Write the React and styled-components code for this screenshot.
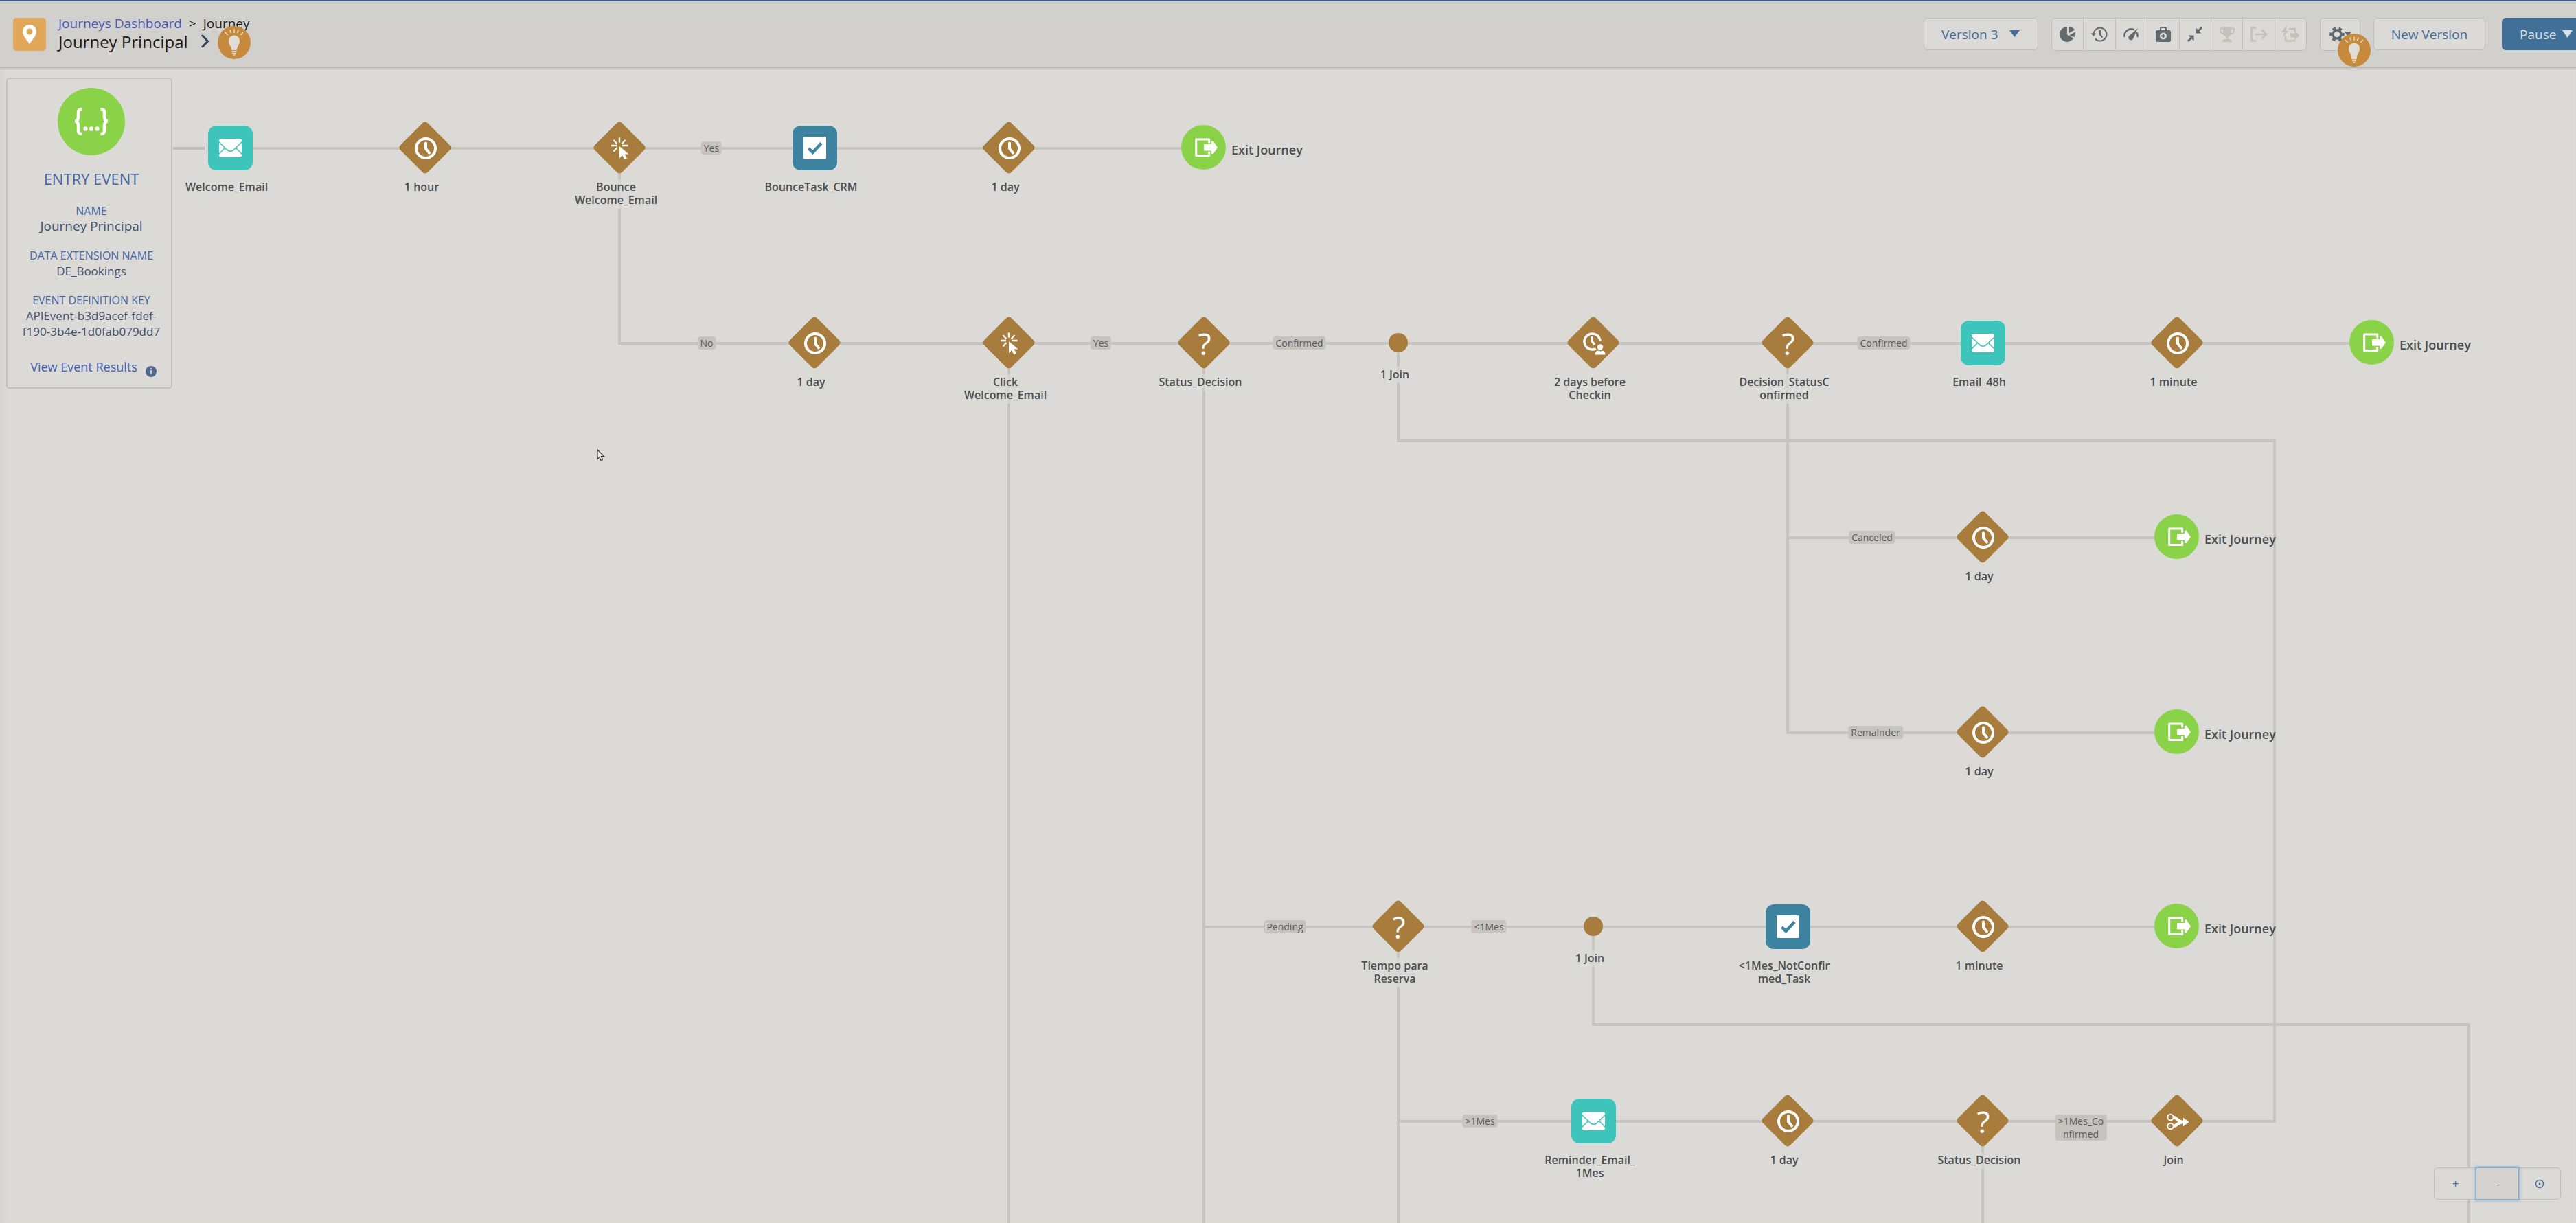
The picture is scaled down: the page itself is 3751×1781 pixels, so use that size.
import React from "react";
import styled, { createGlobalStyle } from "styled-components";

const Global = createGlobalStyle`
  * { box-sizing: border-box; }
  body { margin: 0; background: #dbdad6; font-family: "Open Sans", "Noto Sans", sans-serif; }
  button, select { font-family: inherit; margin: 0; }
`;

const Page = styled.div`
  display: flex;
  flex-direction: column;
  height: 100vh;
  overflow: hidden;
`;

/* ---------- header ---------- */

const Header = styled.header`
  display: flex;
  align-items: center;
  height: 99px;
  flex: none;
  padding-left: 19px;
  background: #d2d0cc;
  border-top: 1px solid #1f60a8;
  border-bottom: 1px solid #b7b4a8;
`;

const Logo = styled.div`
  display: flex;
  align-items: center;
  justify-content: center;
  width: 48px;
  height: 48px;
  border-radius: 5px;
  background: #dfa757;
`;

const Heading = styled.div`
  display: flex;
  flex-direction: column;
  align-items: flex-start;
  margin-left: 18px;
  padding-bottom: 4px;
`;

const Crumbs = styled.nav`
  display: flex;
  gap: 10px;
  font-size: 19px;
  line-height: 25px;
  color: #1c1c1c;
`;

const CrumbLink = styled.a`
  color: #4659b9;
  text-decoration: none;
`;

const TitleRow = styled.div`
  position: relative;
  display: flex;
  align-items: center;
  gap: 18px;
`;

const Title = styled.h1`
  margin: 0;
  font-size: 24px;
  font-weight: 400;
  line-height: 27px;
  color: #1a1a1a;
`;

const PlainButton = styled.button`
  display: flex;
  padding: 0;
  border: 0;
  background: none;
`;

const Tip = styled.div`
  position: absolute;
  z-index: 2;
  left: ${(p) => p.$left};
  top: ${(p) => p.$top}px;
  width: 48px;
  height: 48px;
  border-radius: 50%;
  background: #c68a3d;
`;

const Actions = styled.div`
  display: flex;
  align-items: center;
  gap: 19px;
  margin-left: auto;
`;

const SelectWrap = styled.div`
  position: relative;
  svg { position: absolute; right: 27px; top: 18px; pointer-events: none; }
`;

const VersionSelect = styled.select`
  appearance: none;
  width: 167px;
  height: 47px;
  padding: 0 0 0 25px;
  border: 1px solid #c0beb8;
  border-radius: 6px;
  background: #dbdad6;
  color: #416d9c;
  font-size: 19px;
`;

const Group = styled.div`
  display: flex;
  width: 372px;
  height: 48px;
  border: 1px solid #c0beb8;
  border-radius: 6px;
  background: #dbdad6;
`;

const Tool = styled.button`
  display: flex;
  flex: 1;
  align-items: center;
  justify-content: center;
  padding: 0;
  border: 0;
  background: none;
  color: #616b6f;
  & + & { border-left: 1px solid #c0beb8; }
  &:disabled { color: #c3c1ba; }
`;

const Settings = styled.div`
  position: relative;
  display: flex;
  width: 59px;
  height: 48px;
  border: 1px solid #c0beb8;
  border-radius: 6px;
  background: #dbdad6;
`;

const NewVersion = styled.button`
  width: 163px;
  height: 47px;
  padding: 0;
  border: 1px solid #c0beb8;
  border-radius: 6px;
  background: #dbdad6;
  color: #416d9c;
  font-size: 19px;
`;

const Pause = styled.button`
  display: flex;
  align-items: center;
  gap: 9px;
  width: 108px;
  height: 47px;
  margin-left: 5px;
  padding: 0 0 0 26px;
  border: 0;
  border-radius: 6px 0 0 6px;
  background: #406f98;
  color: #dcdfe0;
  font-size: 19px;
`;

/* ---------- canvas ---------- */

const Canvas = styled.main`
  position: relative;
  flex: 1;
  overflow: hidden;
  background: #dbdad6;
  box-shadow: inset 0 5px 4px -3px #cbc9c5, inset 10px 0 8px -6px #d3d1cd;
`;

const Wires = styled.svg`
  position: absolute;
  inset: 0;
  width: 100%;
  height: 100%;
  fill: none;
  stroke: #c7c4c0;
  stroke-width: 4;
`;

const NodeBox = styled.div`
  position: absolute;
  left: ${(p) => p.$x - 81}px;
  top: ${(p) => p.$y - p.$half}px;
  width: 162px;
`;

const Shape = styled.div`
  display: flex;
  align-items: center;
  justify-content: center;
  height: ${(p) => p.$half * 2}px;
`;

const Caption = styled.div`
  padding: 2px 10px 3px 0;
  background: rgba(219, 218, 214, 0.7);
  color: #4a4e51;
  font-size: 16px;
  font-weight: 600;
  line-height: 19px;
  text-align: center;
  white-space: pre-line;
`;

const ExitBox = styled.div`
  position: absolute;
  left: ${(p) => p.$x - 33}px;
  top: ${(p) => p.$y - 33}px;
  display: flex;
  align-items: center;
  gap: 8px;
`;

const ExitText = styled.span`
  padding-top: 6px;
  color: #4a4e51;
  font-size: 18px;
  font-weight: 600;
  line-height: 24px;
  white-space: nowrap;
`;

const Tag = styled.span`
  position: absolute;
  left: ${(p) => p.$x}px;
  top: ${(p) => p.$y - 9}px;
  padding: 0 4px;
  border-radius: 4px;
  background: #c7c4c0;
  color: #57595a;
  font-size: 14px;
  line-height: 19px;
  text-align: center;
  white-space: pre;
  transform: translateX(-50%);
`;

const EntryCard = styled.section`
  position: absolute;
  left: 9px;
  top: 14px;
  width: 242px;
  height: 453px;
  display: flex;
  flex-direction: column;
  align-items: center;
  padding: 13px 0 0 6px;
  border: 2px solid #c4c2bd;
  border-radius: 5px;
  background: #dbdad6;
`;

const EntryTitle = styled.h2`
  margin: 19px 0 21px;
  color: #4466a3;
  font-size: 22px;
  font-weight: 400;
  line-height: 30px;
`;

const Facts = styled.dl`
  margin: 0;
  text-align: center;
`;

const Term = styled.dt`
  color: #4466a3;
  font-size: 16px;
  line-height: 22px;
`;

const Detail = styled.dd`
  margin: 0 0 20px;
  color: #42506e;
  font-size: ${(p) => (p.$large ? 19 : 17)}px;
  line-height: 23px;
`;

const Results = styled.div`
  display: flex;
  align-items: flex-start;
  gap: 12px;
  margin-top: 8px;
  padding-left: 6px;
`;

const ResultsLink = styled.a`
  color: #4260b5;
  font-size: 18px;
  line-height: 24px;
  text-decoration: none;
`;

const Info = styled.span`
  width: 16px;
  height: 16px;
  margin-top: 11px;
  border-radius: 50%;
  background: #52688f;
  color: #dbdad6;
  font-family: "Liberation Serif", serif;
  font-size: 12px;
  font-weight: 700;
  line-height: 16px;
  text-align: center;
`;

const ZoomBar = styled.div`
  position: absolute;
  right: 22px;
  bottom: 34px;
  display: flex;
  width: 185px;
  height: 47px;
  border: 1px solid #bfbdb7;
  border-radius: 6px;
  background: #dbdad6;
`;

const ZoomButton = styled.button`
  display: flex;
  flex: 1;
  align-items: center;
  justify-content: center;
  padding: 0;
  border: 0;
  background: ${(p) => (p.$on ? "#d5d3cf" : "none")};
  box-shadow: ${(p) => (p.$on ? "0 0 0 1px #8fa9bd, 0 0 4px 2px #78aad2" : "none")};
  color: ${(p) => (p.$on ? "#3c4450" : "#416d9c")};
  font-size: 16px;
`;

const Pointer = styled.svg`
  position: absolute;
  left: 869px;
  top: 555px;
`;

/* ---------- drawings ---------- */

const Triangle = ({ w = 15, h = 10 }) => (
  <svg width={w} height={h} viewBox="0 0 15 10" preserveAspectRatio="none" aria-hidden="true">
    <path d="M0 0h15L7.500 10z" fill="currentColor" />
  </svg>
);

const Bulb = () => (
  <svg width="48" height="48" viewBox="0 0 48 48" fill="#e0ddd6" aria-hidden="true">
    <path d="M24 13.500c-4.800 0-8 3.600-8 8.200 0 5 3.800 8 4.300 13.300h7.400C28.200 29.700 32 26.700 32 21.700c0-4.600-3.200-8.200-8-8.200z" />
    <path d="M20.500 36.800h7M21 39.500h6M22.500 42h3" stroke="#e0ddd6" strokeWidth="1.400" />
    <path d="M24 4.500v5.500M17.800 5.500l1.700 4.700M30.200 5.500l-1.700 4.700M11 9l3.800 4M37 9l-3.800 4" stroke="#e0ddd6" strokeWidth="1.500" />
  </svg>
);

const glyphs = {
  clock: (
    <g fill="none" stroke="#fff" strokeWidth="4" transform="translate(1 1)">
      <circle r="14" />
      <path d="M0-7.500V.5l5 6" strokeLinecap="round" strokeLinejoin="round" />
    </g>
  ),
  click: (
    <g>
      <path d="M-12-3h8M4-3h8.500M0-14.500v7M-8.500-11l5 5.500M8.500-11l-5 5.500M-8.500 5.500l5-5.500" stroke="#fff" strokeWidth="2.400" />
      <path d="M0-2V15.500l4-4.500 3.500 6.500 3.500-2-3.400-6h6z" fill="#fff" />
    </g>
  ),
  clockUser: (
    <g>
      <path d="M3.800 8.700A11.500 11.500 0 1 1 10-2" fill="none" stroke="#fff" strokeWidth="3.500" />
      <path d="M-2-9v7l4 5" fill="none" stroke="#fff" strokeWidth="3.400" />
      <circle cx="10" cy="6.500" r="4.200" fill="#fff" />
      <path d="M2.500 17.500c0-4 1.500-6 4.500-6q3 2 6 0c3 0 4.500 2 4.500 6z" fill="#fff" />
    </g>
  ),
  join: (
    <g fill="none" stroke="#fff">
      <circle cx="-9.500" cy="-5" r="4.200" strokeWidth="2" />
      <circle cx="-9.500" cy="8" r="4.200" strokeWidth="2" />
      <path d="M-5-5C1-4 1 2 9 2M-5 8C1 7 1 2 9 2" strokeWidth="4.500" />
      <path d="M9-4.500L17.500 2 9 8.500z" fill="#fff" stroke="none" />
    </g>
  ),
};

const Diamond = ({ glyph }) => (
  <svg width="80" height="80" viewBox="-40 -40 80 80" aria-hidden="true">
    <rect x="-28" y="-28" width="56" height="56" rx="5" fill="#a87c3c" transform="rotate(45)" />
    {glyph === "question" ? (
      <text x="1" y="18" textAnchor="middle" fill="#fff" fontSize="44" fontWeight="500">?</text>
    ) : (
      glyphs[glyph]
    )}
  </svg>
);

const Email = () => (
  <svg width="65" height="65" viewBox="0 0 65 65" aria-hidden="true">
    <rect width="65" height="65" rx="12" fill="#3ec5bb" />
    <rect x="16" y="19" width="33" height="27" rx="3" fill="#fff" />
    <path d="M15 23l13 12.500q4.500 3.500 9 0L50 23M15 42l9.500-9.500M50 42l-9.500-9.500" fill="none" stroke="#3ec5bb" strokeWidth="1.600" />
  </svg>
);

const Task = () => (
  <svg width="65" height="65" viewBox="0 0 65 65" aria-hidden="true">
    <rect width="65" height="65" rx="12" fill="#3d829e" />
    <rect x="16" y="16" width="33" height="33" rx="2" fill="#fff" />
    <path d="M23.500 33l6 6L42 25.500" fill="none" stroke="#3d829e" strokeWidth="4.500" />
  </svg>
);

const Dot = () => (
  <svg width="28" height="28" aria-hidden="true"><circle cx="14" cy="14" r="14" fill="#a87c3c" /></svg>
);

const ExitIcon = () => (
  <svg width="65" height="65" viewBox="-32.500 -32.500 65 65" aria-hidden="true">
    <circle r="32.500" fill="#8ad349" />
    <path d="M8.200-6v-5.500h-19v23.500h19V6.500" fill="none" stroke="#fff" strokeWidth="3" strokeLinejoin="round" />
    <path d="M1-4h11v-4.500h2L20 .5l-6 8.500h-2V4.500H1z" fill="#fff" stroke="#fff" strokeLinejoin="round" />
  </svg>
);

const Braces = () => (
  <svg width="98" height="98" viewBox="-49 -49 98 98" aria-hidden="true">
    <circle r="49" fill="#8ad349" />
    <path d="M-13.500-18c-5 0-5.500 2-5.500 5v6c0 3-1 6-4.500 6.500C-20 0-19 3-19 6v7c0 3 .5 5 5.500 5M13.500-18c5 0 5.500 2 5.500 5v6c0 3 1 6 4.500 6.500C20 0 19 3 19 6v7c0 3-.5 5-5.500 5" fill="none" stroke="#fff" strokeWidth="4.500" />
    <g fill="#fff">
      <rect x="-11.500" y="7.500" width="6" height="6" rx="2" />
      <rect x="-3" y="7.500" width="6" height="6" rx="2" />
      <rect x="5.500" y="7.500" width="6" height="6" rx="2" />
    </g>
  </svg>
);

const toolIcons = {
  Analytics: (
    <g fill="currentColor">
      <path d="M11 1A11 11 0 1 0 20.500 17.500L11 12.500z" />
      <path d="M14 1v9l8-4.500A10 10 0 0 0 14 1zM23 8.500l-9 5 7.500 2.500A11 11 0 0 0 23 8.500z" />
    </g>
  ),
  History: (
    <g fill="none" stroke="currentColor" strokeWidth="2">
      <path d="M3.500 12A9.500 9.500 0 1 1 6 18.500M13 6v6.500l3.500 4" />
      <path d="M0 10.500h7L3.500 15z" fill="currentColor" stroke="none" />
    </g>
  ),
  Health: (
    <g fill="none" stroke="currentColor" strokeWidth="2.400">
      <path d="M2.500 16A10 10 0 0 1 17 5.500M20 9a9 9 0 0 1 1.500 7" />
      <path d="M22 3l-7 15.500a3.600 3.600 0 1 1-5.500-4.500z" fill="currentColor" stroke="none" />
    </g>
  ),
  Test: (
    <g>
      <path d="M8 6V3.500Q8 2 9.500 2h5Q16 2 16 3.500V6" fill="none" stroke="currentColor" strokeWidth="2" />
      <rect x="1" y="6" width="22" height="17" rx="2.500" fill="currentColor" />
      <circle cx="12" cy="14.500" r="5" fill="#dbdad6" />
      <path d="M12 11.500v6M9 14.500h6" stroke="currentColor" strokeWidth="2.200" />
    </g>
  ),
  Collapse: (
    <g fill="currentColor">
      <path d="M13.500 2.500v8h8l-3-3L23 3l-2-2-4.500 4.500zM10.500 21.500v-8h-8l3 3L1 21l2 2 4.500-4.500z" />
    </g>
  ),
  Goal: (
    <g fill="currentColor">
      <path d="M6 1h12v9a6 6 0 0 1-4.500 5.500V19h-3v-3.500A6 6 0 0 1 6 10z" />
      <path d="M6 3.500H2V6q0 4.500 5 5.500M18 3.500h4V6q0 4.500-5 5.500" fill="none" stroke="currentColor" strokeWidth="2" />
      <path d="M5 23q0-4 4-4h6q4 0 4 4z" />
    </g>
  ),
  Exit: (
    <g fill="none" stroke="currentColor" strokeWidth="2.600">
      <path d="M8.500 2.500h-7v19h7M7 12h15M16.500 5.500L23 12l-6.500 6.500" />
    </g>
  ),
  "Quick exit": (
    <g fill="none" stroke="currentColor" strokeWidth="2.400">
      <path d="M10 4h8.500v4M5 14v7.500h13.500V19" />
      <path d="M7.500-2L-1 9h4.500L1 16 9 7H5z" fill="currentColor" stroke="none" />
      <path d="M12 10.500h7V7l6.500 6.500L19 20v-3.500h-7z" fill="currentColor" stroke="none" />
    </g>
  ),
};

const ToolIcon = ({ name }) => (
  <svg width="24" height="24" viewBox="0 0 24 24" overflow="visible" aria-hidden="true">{toolIcons[name]}</svg>
);

const Gear = () => (
  <svg width="22" height="22" viewBox="-11 -11 22 22" fill="none" stroke="currentColor" aria-hidden="true">
    <circle r="6" strokeWidth="3.500" />
    <circle r="9" strokeWidth="3.500" strokeDasharray="4.700 4.725" strokeDashoffset="2.300" />
  </svg>
);

/* ---------- journey data ---------- */

const col = [335, 619, 902, 1186, 1469, 1753, 2036, 2320, 2603, 2887, 3170, 3454];
const row = [116, 400, 683, 967, 1250, 1533];

const nodes = [
  [0, 0, "email", "Welcome_Email"],
  [1, 0, "clock", "1 hour"],
  [2, 0, "click", "Bounce\nWelcome_Email"],
  [3, 0, "task", "BounceTask_CRM"],
  [4, 0, "clock", "1 day"],
  [3, 1, "clock", "1 day"],
  [4, 1, "click", "Click\nWelcome_Email"],
  [5, 1, "question", "Status_Decision"],
  [6, 1, "dot", "1 Join"],
  [7, 1, "clockUser", "2 days before\nCheckin"],
  [8, 1, "question", "Decision_StatusC\nonfirmed"],
  [9, 1, "email", "Email_48h"],
  [10, 1, "clock", "1 minute"],
  [9, 2, "clock", "1 day"],
  [9, 3, "clock", "1 day"],
  [6, 4, "question", "Tiempo para\nReserva"],
  [7, 4, "dot", "1 Join"],
  [8, 4, "task", "<1Mes_NotConfir\nmed_Task"],
  [9, 4, "clock", "1 minute"],
  [7, 5, "email", "Reminder_Email_\n1Mes"],
  [8, 5, "clock", "1 day"],
  [9, 5, "question", "Status_Decision"],
  [10, 5, "join", "Join"],
];

const exits = [[5, 0], [11, 1], [10, 2], [10, 3], [10, 4]];

const tags = [
  [1036, 0, "Yes"],
  [1029, 1, "No"],
  [1603, 1, "Yes"],
  [1892, 1, "Confirmed"],
  [2743, 1, "Confirmed"],
  [2726, 2, "Canceled"],
  [2731, 3, "Remainder"],
  [1871, 4, "Pending"],
  [2168, 4, "<1Mes"],
  [2155, 5, ">1Mes"],
  [3030, 5, ">1Mes_Co\nnfirmed"],
];

const far = 4000;
const line = row.map((y) => y + 1);
const wires = [
  `M${col[0]} ${line[0]}H${col[5]}`,
  `M${col[2]} ${line[0]}V${line[1]}H${col[11]}`,
  `M${col[4]} ${line[1]}V${far}`,
  `M${col[5]} ${line[1]}V${far}`,
  `M${col[6]} ${line[1]}V543H3312V${line[5]}H${col[6]}`,
  `M${col[8]} ${line[1]}V${line[3]}H${col[10]}`,
  `M${col[8]} ${line[2]}H${col[10]}`,
  `M${col[5]} ${line[4]}H${col[10]}`,
  `M${col[6]} ${line[4]}V${far}`,
  `M${col[7]} ${line[4]}V1393H3595V${far}`,
  `M${col[9]} ${line[5]}V${far}`,
];

const JourneyNode = ({ c, r, kind, label }) => {
  const half = kind === "dot" ? 35 : 46;
  return (
    <NodeBox $x={col[c]} $y={row[r]} $half={half}>
      <Shape $half={half}>
        {kind === "email" ? <Email /> : kind === "task" ? <Task /> : kind === "dot" ? <Dot /> : <Diamond glyph={kind} />}
      </Shape>
      <Caption>{label}</Caption>
    </NodeBox>
  );
};

export default function App() {
  return (
    <Page>
      <Global />
      <Header>
        <Logo>
          <svg width="22" height="30" viewBox="0 0 22 30" aria-hidden="true">
            <path fillRule="evenodd" d="M11 1C5 1 1 5.500 1 11c0 7 6 11.500 10 18 4-6.500 10-11 10-18C21 5.500 17 1 11 1zm0 5.500a4.500 4.500 0 1 1 0 9 4.500 4.500 0 0 1 0-9z" fill="#fff" />
          </svg>
        </Logo>
        <Heading>
          <Crumbs aria-label="Breadcrumb">
            <CrumbLink href="#dashboard">Journeys Dashboard</CrumbLink>
            <span>&gt;</span>
            <span>Journey</span>
          </Crumbs>
          <TitleRow>
            <Title>Journey Principal</Title>
            <PlainButton aria-label="Show details">
              <svg width="13" height="20" viewBox="0 0 13 20" fill="none" stroke="#34435c" strokeWidth="3">
                <path d="M2 1l8.500 9L2 19" />
              </svg>
            </PlainButton>
            <Tip $left="calc(100% + 12px)" $top={-9}><Bulb /></Tip>
          </TitleRow>
        </Heading>
        <Actions>
          <SelectWrap>
            <VersionSelect aria-label="Version" defaultValue="3">
              <option value="3">Version 3</option>
            </VersionSelect>
            <svg width="15" height="10" viewBox="0 0 15 10"><path d="M0 0h15L7.500 10z" fill="#416d9c" /></svg>
          </SelectWrap>
          <Group>
            {Object.keys(toolIcons).map((name, i) => (
              <Tool key={name} aria-label={name} disabled={i > 4}><ToolIcon name={name} /></Tool>
            ))}
          </Group>
          <Settings>
            <Tool aria-label="Settings"><Gear /><Triangle w={10} h={8} /></Tool>
            <Tip $left="25px" $top={22}><Bulb /></Tip>
          </Settings>
          <NewVersion>New Version</NewVersion>
          <Pause>Pause <Triangle w={15} h={11} /></Pause>
        </Actions>
      </Header>
      <Canvas>
        <Wires aria-hidden="true">
          {wires.map((d) => <path key={d} d={d} />)}
          <path d={`M252 ${line[0]}H298`} stroke="#bebcb7" />
        </Wires>
        {tags.map(([x, r, text]) => <Tag key={x} $x={x} $y={row[r]}>{text}</Tag>)}
        {nodes.map(([c, r, kind, label]) => <JourneyNode key={`${c}-${r}`} c={c} r={r} kind={kind} label={label} />)}
        {exits.map(([c, r]) => (
          <ExitBox key={`${c}-${r}`} $x={col[c]} $y={row[r]}>
            <ExitIcon />
            <ExitText>Exit Journey</ExitText>
          </ExitBox>
        ))}
        <EntryCard>
          <Braces />
          <EntryTitle>ENTRY EVENT</EntryTitle>
          <Facts>
            <Term>NAME</Term>
            <Detail $large>Journey Principal</Detail>
            <Term>DATA EXTENSION NAME</Term>
            <Detail>DE_Bookings</Detail>
            <Term>EVENT DEFINITION KEY</Term>
            <Detail>APIEvent-b3d9acef-fdef-<br />f190-3b4e-1d0fab079dd7</Detail>
          </Facts>
          <Results>
            <ResultsLink href="#results">View Event Results</ResultsLink>
            <Info>i</Info>
          </Results>
        </EntryCard>
        <Pointer width="12" height="18" viewBox="0 0 12 18" aria-label="Pointer">
          <path d="M1 1v13.500l3-3 2 5 2.500-1-2-4.800h4.300z" fill="#f2f1ef" stroke="#3b3b3b" strokeWidth="1.200" />
        </Pointer>
        <ZoomBar>
          <ZoomButton aria-label="Zoom in">+</ZoomButton>
          <ZoomButton aria-label="Zoom out" $on>-</ZoomButton>
          <ZoomButton aria-label="Reset zoom">
            <svg width="14" height="14" viewBox="0 0 14 14"><circle cx="7" cy="7" r="5.500" fill="none" stroke="currentColor" strokeWidth="1.400" /><circle cx="7" cy="7" r="1.300" fill="currentColor" /></svg>
          </ZoomButton>
        </ZoomBar>
      </Canvas>
    </Page>
  );
}
